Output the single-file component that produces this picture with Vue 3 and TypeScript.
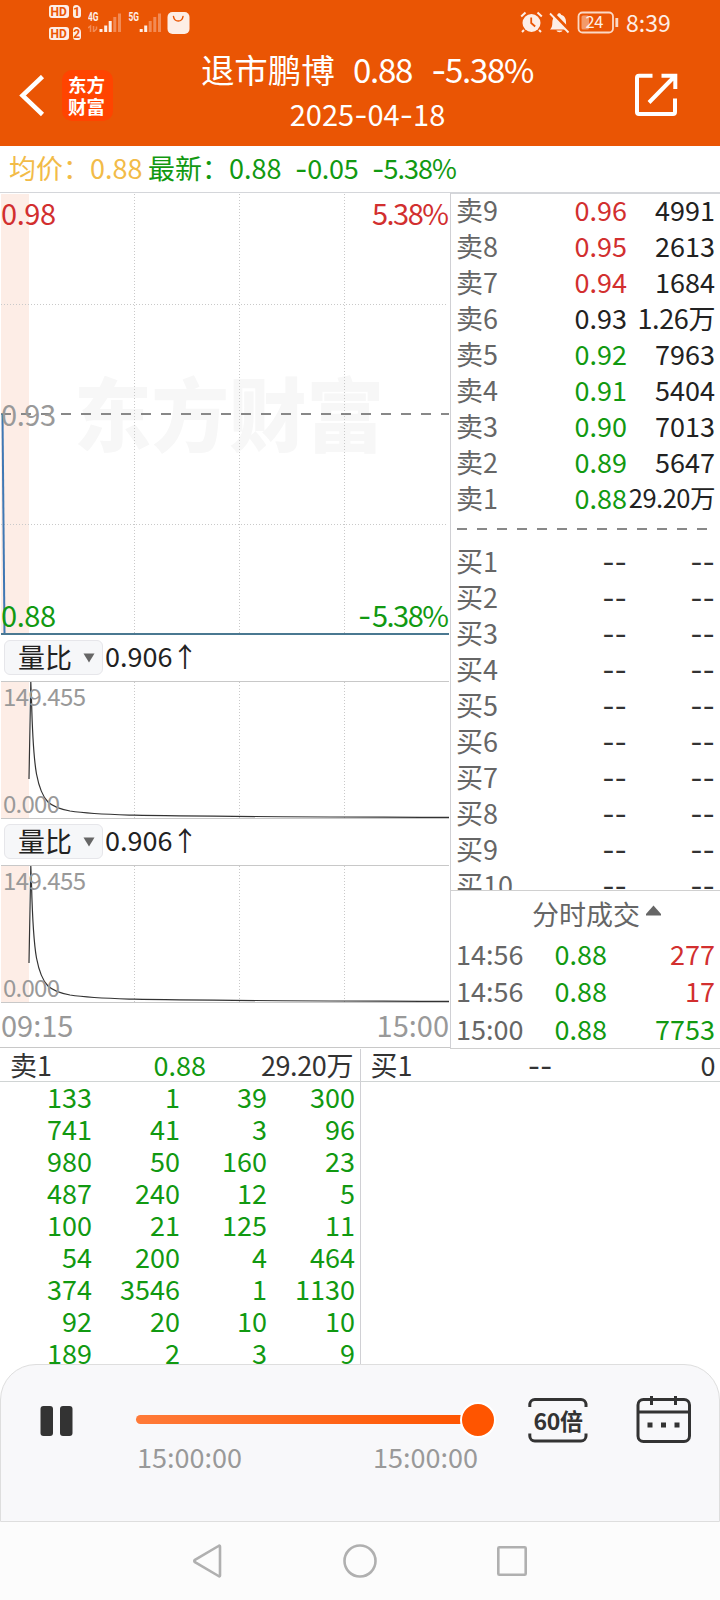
<script setup lang="ts">
import { h, type FunctionalComponent } from 'vue'

type Tone = 'up' | 'down' | 'flat'
interface Quote { label: string; price: string; volume: string; tone: Tone }
interface Tick { time: string; price: string; volume: string; tone: Tone }

// Renders a quote value; minus signs use a wider glyph than the digits' font has.
const Val: FunctionalComponent<{ t: string }> = (props) =>
  h('span', props.t.split(/(-)/).filter(Boolean).map((p) => (p === '-' ? h('span', { class: 'minus' }, p) : p)))
Val.props = ['t']

const sells: Quote[] = [
  { label: '卖9', price: '0.96', volume: '4991', tone: 'up' },
  { label: '卖8', price: '0.95', volume: '2613', tone: 'up' },
  { label: '卖7', price: '0.94', volume: '1684', tone: 'up' },
  { label: '卖6', price: '0.93', volume: '1.26万', tone: 'flat' },
  { label: '卖5', price: '0.92', volume: '7963', tone: 'down' },
  { label: '卖4', price: '0.91', volume: '5404', tone: 'down' },
  { label: '卖3', price: '0.90', volume: '7013', tone: 'down' },
  { label: '卖2', price: '0.89', volume: '5647', tone: 'down' },
  { label: '卖1', price: '0.88', volume: '29.20万', tone: 'down' },
]
const buys: Quote[] = Array.from({ length: 10 }, (_, i) => ({
  label: `买${i + 1}`, price: '--', volume: '--', tone: 'flat' as Tone,
}))
const ticks: Tick[] = [
  { time: '14:56', price: '0.88', volume: '277', tone: 'up' },
  { time: '14:56', price: '0.88', volume: '17', tone: 'up' },
  { time: '15:00', price: '0.88', volume: '7753', tone: 'down' },
]
const queue: number[][] = [
  [133, 1, 39, 300],
  [741, 41, 3, 96],
  [980, 50, 160, 23],
  [487, 240, 12, 5],
  [100, 21, 125, 11],
  [54, 200, 4, 464],
  [374, 3546, 1, 1130],
  [92, 20, 10, 10],
  [189, 2, 3, 9],
]
const indicators = [
  { name: '量比', value: '0.906', max: '149.455', min: '0.000' },
  { name: '量比', value: '0.906', max: '149.455', min: '0.000' },
]
const gridX = [134.5, 239.5, 344.5]
</script>

<template>
  <div class="phone">
    <header class="top">
      <div class="status">
        <div class="hd">
          <span class="hd-row"><b>HD</b><i>1</i></span>
          <span class="hd-row"><b>HD</b><i>2</i></span>
        </div>
        <svg class="signal" width="110" height="26" viewBox="0 0 110 26">
          <g class="net">
            <text x="0" y="10.200" textLength="10.500" lengthAdjust="spacingAndGlyphs">4G</text>
            <text x="40.500" y="10.200" textLength="10.500" lengthAdjust="spacingAndGlyphs">5G</text>
          </g>
          <g class="bars">
            <path d="M13 21v-3M17.700 21v-6.500M22.200 21v-11M53.200 21v-3M57.700 21v-6.500" />
            <path class="dim" d="M26.800 21v-15M31.500 21v-18.500M62.200 21v-11M66.800 21v-15M71.500 21v-18.500" />
          </g>
          <path class="dim thin" d="M0 17l2.500-2v6M5.500 15v6M8.500 15.500v2.500l-2.500 2.500" />
          <rect x="79.500" y="1" width="22" height="22" rx="5" fill="#fdeee6" />
          <path d="M85.500 5.500c1 6 8.500 6 9.500 0" fill="none" stroke="#ea5504" stroke-width="1.500" stroke-linecap="round" />
        </svg>
        <div class="status-right">
          <svg width="102" height="26" viewBox="0 0 102 26">
            <circle cx="11.500" cy="14" r="9" fill="#fdeee6" />
            <path d="M1.200 7.500L5.500 3.500M17.500 3.500L21.800 7.500M4 21l-2 2M19 21l2 2" stroke="#fdeee6" stroke-width="2" />
            <path d="M11.200 8.500v5.500l4 3.500" fill="none" stroke="#ea5504" stroke-width="1.800" />
            <path d="M30 20.500c3-3 2-6 2.500-9 .6-3.500 3-5.200 5-5.700 0-2 3.500-2 3.500 0 3.500 1 5 4 5 7 0 4 .5 6 2.500 7.700zM36.500 21.500h6c-.6 2.300-5.400 2.300-6 0z" fill="#fdeee6" />
            <path d="M31 3l18.500 19" stroke="#ea5504" stroke-width="4" />
            <path d="M30 4.500l18.500 19" stroke="#fdeee6" stroke-width="1.800" />
            <rect x="58.500" y="3.500" width="34.500" height="20" rx="4" fill="none" stroke="#fbd9c6" stroke-width="1.800" />
            <rect x="61.500" y="6.500" width="7.500" height="14" rx="1.500" fill="#f39a69" />
            <path d="M96.800 9v9" stroke="#fbd9c6" stroke-width="2.800" />
            <text x="65.500" y="19.200" class="bat" textLength="18">24</text>
          </svg>
          <span class="clock">8:39</span>
        </div>
      </div>
      <div class="title-bar">
        <svg class="back" width="26" height="42" viewBox="0 0 26 42">
          <path d="M23.500 1.500L3.500 20.500L23.500 39.500" />
        </svg>
        <div class="logo"><span>东方</span><span>财富</span></div>
        <div class="title">
          <div class="line1">退市鹏博<Val class="t-price" t="0.88" /><Val class="t-pct" t="-5.38%" /></div>
          <div class="line2"><Val t="2025-04-18" /></div>
        </div>
        <svg class="share" width="44" height="44" viewBox="0 0 44 44">
          <path d="M18.500 2.800H5a2 2 0 0 0-2 2V39a2 2 0 0 0 2 2H39a2 2 0 0 0 2-2V25.500M27.500 2.800H41.300V16M41 3L15 29.500" />
        </svg>
      </div>
    </header>

    <div class="info">
      <span class="avg">均价：<Val t="0.88" /></span>
      <span class="last">最新：<Val t="0.88" /></span>
      <Val class="chg" t="-0.05" />
      <Val class="pct" t="-5.38%" />
    </div>

    <main class="board">
      <section class="charts">
        <svg class="price-chart" width="449" height="442" viewBox="0 193 449 442">
          <rect x="1" y="194" width="28" height="439" fill="#fdede6" />
          <text class="mark" x="74" y="445" textLength="310" lengthAdjust="spacingAndGlyphs">东方财富</text>
          <path v-for="x in gridX" :key="x" class="grid" :d="`M${x} 194V633`" />
          <path class="grid" d="M1 304.500H448M1 524.500H448" />
          <path d="M1 414H449" stroke="#888" stroke-width="2" stroke-dasharray="10 10" />
          <path d="M2.500 414L4.500 633.500" stroke="#3f78b4" stroke-width="2" fill="none" />
          <path d="M1 634H449" stroke="#4a7891" stroke-width="2" />
          <text class="lbl up" x="1" y="225" textLength="55">0.98</text>
          <text class="lbl up" x="449" y="225" text-anchor="end" textLength="77">5.38%</text>
          <text class="lbl grey" x="1" y="426" textLength="55">0.93</text>
          <text class="lbl down" x="1" y="627" textLength="55">0.88</text>
          <text class="lbl down" x="449" y="627" text-anchor="end" textLength="77">5.38%</text>
          <text class="lbl down minus" x="358" y="627">-</text>
        </svg>

        <template v-for="(ind, i) in indicators" :key="i">
          <div class="ind-head">
            <button class="pick">{{ ind.name }}
              <svg width="12" height="10" viewBox="0 0 12 10"><path d="M0.500 0.500h11L6 9.500z" fill="#666" /></svg>
            </button>
            <span class="ind-val">{{ ind.value }}</span><span class="arrow">↑</span>
          </div>
          <svg class="ind-chart" width="449" height="138" viewBox="0 681 449 138">
            <rect x="1" y="682" width="28" height="136" fill="#fdede6" />
            <path v-for="x in gridX" :key="x" class="grid" :d="`M${x} 682V818`" />
            <path d="M1 681.500H449M1 818.500H449" stroke="#c8c8c8" />
            <path class="curve" d="M29 779L30.800 682L31.500 700C32.500 738 34 760 36.500 774C39 787 42 796 48 802C54 807.500 62 809.500 70 811C90 814 112 814.500 134 815.200C190 816.600 300 816.800 449 817.400" />
            <text class="lbl small" x="3" y="705.500" textLength="83">{{ ind.max }}</text>
            <text class="lbl small" x="3" y="812.500" textLength="57">{{ ind.min }}</text>
          </svg>
        </template>
        <div class="axis"><span>09:15</span><span>15:00</span></div>
      </section>

      <aside class="book">
        <div class="depth">
          <div v-for="q in sells" :key="q.label" class="quote">
            <span class="name">{{ q.label }}</span>
            <span class="price" :class="q.tone">{{ q.price }}</span>
            <span class="vol" :class="{ wan: q.volume.endsWith('万'), long: q.volume.length > 5 }">{{ q.volume }}</span>
          </div>
          <svg class="split" width="263" height="27"><path d="M0 11H251" stroke="#888" stroke-width="2" stroke-dasharray="10 10" /></svg>
          <div v-for="q in buys" :key="q.label" class="quote">
            <span class="name">{{ q.label }}</span>
            <Val class="price none" :t="q.price" />
            <Val class="vol none" :t="q.volume" />
          </div>
        </div>
        <div class="ticks">
          <div class="ticks-head">分时成交<svg width="17" height="11" viewBox="0 0 17 11"><path d="M8.500 .500L16 9v1.500H1V9z" fill="#666" /></svg></div>
          <div v-for="(t, i) in ticks" :key="i" class="tick">
            <span>{{ t.time }}</span>
            <span class="down">{{ t.price }}</span>
            <span :class="t.tone">{{ t.volume }}</span>
          </div>
        </div>
      </aside>
    </main>

    <section class="queues">
      <div class="q-side sell">
        <div class="q-head"><span>卖1</span><span class="down">0.88</span><span class="wan">29.20万</span></div>
        <div v-for="(row, i) in queue" :key="i" class="q-row">
          <span v-for="(n, j) in row" :key="j">{{ n }}</span>
        </div>
      </div>
      <div class="q-side buy">
        <div class="q-head"><span>买1</span><Val t="--" /><span>0</span></div>
      </div>
    </section>

    <footer class="player">
      <svg class="pause" width="34" height="32" viewBox="0 0 34 32">
        <rect x="0.500" y="1" width="12.500" height="30" rx="3" fill="#333" /><rect x="20" y="1" width="12.500" height="30" rx="3" fill="#333" />
      </svg>
      <div class="seek">
        <div class="track"><i class="thumb"></i></div>
        <div class="times"><span>15:00:00</span><span>15:00:00</span></div>
      </div>
      <div class="speed">
        <svg width="60" height="48" viewBox="0 0 60 48">
          <path d="M1.800 10V7a5 5 0 0 1 5-4.500H53a5 5 0 0 1 5 4.500V10M1.800 36.500V39a5 5 0 0 0 5 5H53a5 5 0 0 0 5-5V36.500" />
        </svg>
        <span>60倍</span>
      </div>
      <svg class="calendar" width="56" height="50" viewBox="0 0 56 50">
        <rect x="2" y="4.500" width="51.500" height="42" rx="5.500" />
        <path d="M2 17H53.500M15.500 1V10M39.500 1V10" />
        <path d="M11.500 30h5M25 30h5M38.500 30h5" stroke-width="5" />
      </svg>
    </footer>

    <nav class="nav">
      <svg class="tri" width="32" height="36" viewBox="0 0 32 36"><path d="M28 3.500V32.500Q28 34 26.500 33L3 19.200Q1.500 18 3 16.800L26.500 3Q28 2 28 3.500z" /></svg>
      <svg width="36" height="36" viewBox="0 0 36 36"><circle cx="18" cy="18" r="15.500" /></svg>
      <svg class="sq" width="32" height="36" viewBox="0 0 32 36"><rect x="2.300" y="4.300" width="27.400" height="27.400" rx="1" /></svg>
    </nav>
  </div>
</template>

<style>
body { background: #fff; }
.minus { font-family: Inter, sans-serif; }
</style>

<style scoped>
.phone {
  width: 720px; height: 1600px; overflow: hidden; display: flex; flex-direction: column;
  background: #fff; color: #333; font: 27px/36px "Noto Sans CJK SC", sans-serif; white-space: nowrap;
}
.phone * { box-sizing: border-box; }
svg { display: block; flex: none; }
.up { color: #d22f2f; fill: #d22f2f; }
.down { color: #119911; fill: #119911; }
.grey { fill: #999; }

.top { height: 146px; flex: none; background: #ea5504; color: #fff; }
.status { height: 46px; display: flex; padding-left: 49px; align-items: flex-start; }
.hd { width: 39px; padding-top: 5px; display: flex; flex-direction: column; gap: 9px; }
.hd-row { display: flex; gap: 4px; height: 13px; }
.hd-row b, .hd-row i {
  display: block; height: 13px; font: bold 12px/14px Roboto, sans-serif; text-align: center;
  background: #fdeee6; color: #ea5504; border-radius: 3px;
}
.hd-row b { width: 19.500px; }
.hd-row i { width: 8.500px; border-top-right-radius: 5px; }
.signal { margin-top: 11px; }
.net text { font: bold 12.500px Roboto, sans-serif; fill: #fdeee6; }
.bars path { stroke: #fdeee6; stroke-width: 3; }
.bars path.dim { stroke: #f28b55; }
.thin { stroke: #f28b55; stroke-width: 1.500; fill: none; }
.status-right { margin-left: 322px; padding-top: 9px; display: flex; }
.bat { font: 16.500px "Noto Sans CJK SC", sans-serif; fill: #fdeee6; }
.clock { margin-left: 4px; font-size: 23px; line-height: 26px; color: #fdeee6; }
.title-bar { display: flex; align-items: flex-start; height: 100px; }
.back { margin: 29px 0 0 19px; fill: none; stroke: #fff; stroke-width: 4.500; }
.logo {
  width: 51px; height: 51px; margin: 24px 0 0 17px; border-radius: 10px; background: #ff4400;
  display: flex; flex-direction: column; align-items: center; padding: 2.500px 2px 0 0;
  font-size: 18.500px; font-weight: 700; line-height: 22px;
}
.title { width: 510px; margin-right: 11px; display: flex; flex-direction: column; align-items: center; }
.line1 { font-size: 33.500px; line-height: 46px; display: flex; margin-left: -2px; }
.t-price { margin-left: 18px; font-size: 33px; letter-spacing: -1.200px; }
.t-pct { margin-left: 19px; font-size: 33px; letter-spacing: -1.300px; }
.line2 { font-size: 29px; line-height: 40px; margin: -1px 0 0 -1px; }
.share { margin-top: 27px; fill: none; stroke: #fff; stroke-width: 4; }

.info { height: 47px; flex: none; border-bottom: 1px solid #d4d6da; display: flex; padding-left: 9px; line-height: 44px; }
.avg { color: #f2bb48; width: 139px; }
.last, .chg, .pct { color: #119911; }
.last { width: 147px; }
.chg { width: 77px; letter-spacing: -.3px; }
.pct { letter-spacing: -1px; }

.board { display: flex; height: 856px; flex: none; align-items: flex-start; }
.charts { width: 450px; height: 855px; flex: none; border-bottom: 1px solid #c8c8c8; }
.grid { stroke: #c9c9c9; stroke-width: 1; stroke-dasharray: 1 2; }
.mark { font-size: 80px; font-weight: 900; fill: #f7f7f7; }
.lbl { font-size: 29px; }
.small { font-size: 24px; fill: #999; }
.curve { fill: none; stroke: #333; stroke-width: 1.200; }
.ind-head { height: 46px; display: flex; align-items: flex-start; padding: 5px 0 0 4px; }
.pick {
  width: 99px; height: 35px; border: 1px solid #e6e6ea; border-radius: 6px; background: #f6f7f9; color: #222;
  padding: 0 7px 2px 13px; font: 27px/32px "Noto Sans CJK SC", sans-serif; display: flex; align-items: center; justify-content: space-between;
}
.pick svg { margin-top: 2px; }
.ind-val { margin-left: 2px; line-height: 31px; color: #222; }
.arrow { line-height: 31px; color: #222; margin-left: -1px; }
.axis { display: flex; justify-content: space-between; padding: 0 1px; font-size: 29px; line-height: 43px; color: #999; }

.book { width: 270px; height: 856px; border-left: 1px solid #d0d0d4; display: flex; flex-direction: column; border-bottom: 1px solid #d0d0d0; }
.depth { height: 698px; flex: none; overflow: hidden; border-bottom: 1px solid #d0d0d0; border-top: 1px solid #d4d6da; padding-left: 5px; }
.quote { height: 36px; line-height: 31px; display: grid; grid-template-columns: 61px 110px 88px; }
.name { color: #666; }
.price, .vol { text-align: right; }
.vol { color: #222; margin-left: -10px; }
.vol.wan { letter-spacing: -.4px; }
.vol.long { font-size: 25.500px; letter-spacing: -.5px; line-height: 30px; }
.split { margin-left: 1px; }
.price.flat { color: #222; }
.none { color: #333; }
.ticks-head { height: 45px; line-height: 45px; padding-left: 81px; color: #666; display: flex; }
.ticks-head svg { margin: 14px 0 0 5px; }
.tick { height: 37.300px; line-height: 35px; display: grid; grid-template-columns: 80px 71px 108px; padding-left: 5px; color: #666; }
.tick span:nth-child(n + 2) { text-align: right; }

.queues { height: 315px; flex: none; display: flex; }
.q-side { width: 360px; }
.q-side.sell { border-right: 1px solid #d0d0d4; width: 361px; border-top: 0; }
.q-head { height: 33px; line-height: 32px; border-bottom: 1px solid #d0d4d4; display: grid; padding-left: 10px; }
.sell .q-head { grid-template-columns: 80px 116px 147px; }
.buy .q-head { grid-template-columns: 80px 102px 163px; }
.q-head > :nth-child(n + 2) { text-align: right; }
.q-head .wan { letter-spacing: -.4px; }
.q-row { height: 32px; line-height: 29px; display: grid; grid-template-columns: 92px 88px 87px 88px; text-align: right; color: #119911; }

.player {
  height: 158px; flex: none; border: 1px solid #dedede; border-radius: 36px 36px 0 0; background: #f8f8fa;
  display: flex; align-items: flex-start; position: relative;
}
.pause { margin: 39.500px 0 0 39px; }
.seek { margin: 50px 0 0 62px; width: 342px; }
.track { height: 9px; border-radius: 5px; background: linear-gradient(90deg, #ff7a38, #ff5500 98%); position: relative; }
.thumb {
  position: absolute; right: -18px; top: -13px; width: 36px; height: 36px; border-radius: 50%;
  background: #ff5500; border: 2px solid #fff;
}
.times { display: flex; justify-content: space-between; margin: 15px 0 0 1px; color: #999; line-height: 36px; }
.speed { margin: 32px 0 0 50px; width: 60px; height: 48px; display: grid; }
.speed > * { grid-area: 1 / 1; }
.speed svg { fill: none; stroke: #333; stroke-width: 3; }
.speed span { text-align: center; font-size: 23px; font-weight: 700; line-height: 47px; letter-spacing: -.3px; }
.calendar { margin: 30px 0 0 48px; fill: none; stroke: #333; stroke-width: 3; }
.nav { flex: 1; background: #fcfcfc; display: flex; justify-content: center; gap: 118px; padding-top: 21px; }
.tri { margin-left: -1px; }
.nav svg { fill: none; stroke: #b0b0b0; stroke-width: 2.600; }
</style>
